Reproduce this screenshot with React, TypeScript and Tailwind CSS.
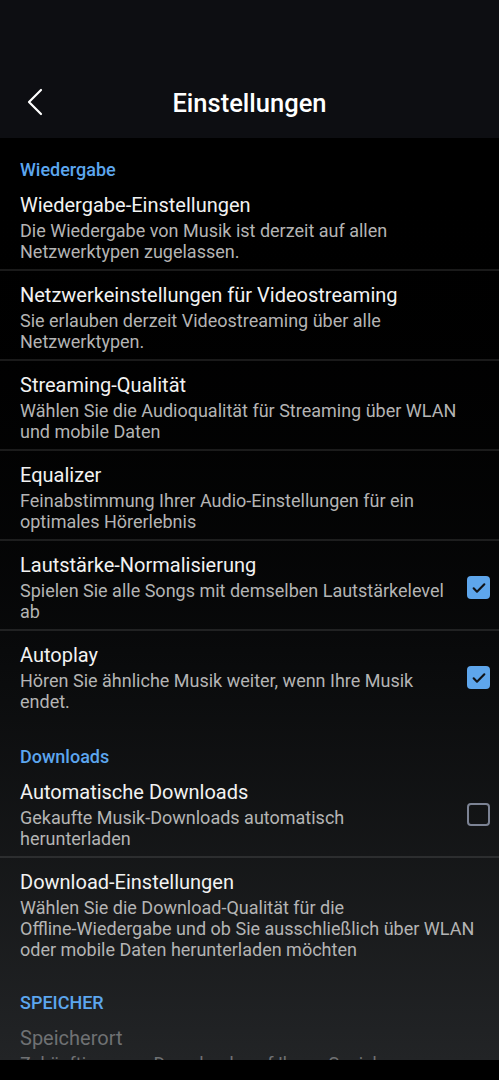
import React from 'react';

type Item = {
  title: string;
  lines: string[];
  checked?: boolean;
  disabled?: boolean;
  divider?: boolean;
};

type Section = {
  label: string;
  pad: string;
  items: Item[];
};

const sections: Section[] = [
  {
    label: 'Wiedergabe',
    pad: 'pt-[21px]',
    items: [
      { title: 'Wiedergabe-Einstellungen', lines: ['Die Wiedergabe von Musik ist derzeit auf allen', 'Netzwerktypen zugelassen.'], divider: true },
      { title: 'Netzwerkeinstellungen für Videostreaming', lines: ['Sie erlauben derzeit Videostreaming über alle', 'Netzwerktypen.'], divider: true },
      { title: 'Streaming-Qualität', lines: ['Wählen Sie die Audioqualität für Streaming über WLAN', 'und mobile Daten'], divider: true },
      { title: 'Equalizer', lines: ['Feinabstimmung Ihrer Audio-Einstellungen für ein', 'optimales Hörerlebnis'], divider: true },
      { title: 'Lautstärke-Normalisierung', lines: ['Spielen Sie alle Songs mit demselben Lautstärkelevel', 'ab'], checked: true, divider: true },
      { title: 'Autoplay', lines: ['Hören Sie ähnliche Musik weiter, wenn Ihre Musik', 'endet.'], checked: true },
    ],
  },
  {
    label: 'Downloads',
    pad: 'pt-[27px]',
    items: [
      { title: 'Automatische Downloads', lines: ['Gekaufte Musik-Downloads automatisch', 'herunterladen'], checked: false, divider: true },
      {
        title: 'Download-Einstellungen',
        lines: ['Wählen Sie die Download-Qualität für die', 'Offline-Wiedergabe und ob Sie ausschließlich über WLAN', 'oder mobile Daten herunterladen möchten'],
      },
    ],
  },
  {
    label: 'SPEICHER',
    pad: 'pt-[25px]',
    items: [
      { title: 'Speicherort', lines: ['Zukünftige neue Downloads auf Ihrem Speicher'], disabled: true },
    ],
  },
];

const Checkbox = ({ checked }: { checked: boolean }) =>
  checked ? (
    <div className="w-[23px] h-[23px] rounded-[4px] bg-[#5ea6ec] flex items-center justify-center">
      <svg width="16" height="16" viewBox="0 0 24 24" fill="none" stroke="#111418" strokeWidth="3.2" strokeLinecap="round" strokeLinejoin="round">
        <path d="M4 12.5l5 5L20 6.5" />
      </svg>
    </div>
  ) : (
    <div className="w-[23px] h-[23px] rounded-[4px] border-2 border-[#7c8394]" />
  );

const Row = ({ item }: { item: Item }) => (
  <div className={`flex items-center px-5 pt-3 pb-[7px] ${item.divider ? 'border-b-2 border-white/10' : ''}`}>
    <div className="flex-1 min-w-0">
      <p className={`text-[20px] leading-6 ${item.disabled ? 'text-[#6f7173]' : 'text-[#f2f2f2]'}`}>{item.title}</p>
      <div className={`mt-[3px] text-[18px] leading-[21px] ${item.disabled ? 'text-[#6f7173]' : 'text-[#b4b4b4]'}`}>
        {item.lines.map(l => (
          <p key={l} className="whitespace-nowrap">{l}</p>
        ))}
      </div>
    </div>
    {item.checked !== undefined && (
      <div className="ml-3 mr-[-11px] shrink-0">
        <Checkbox checked={item.checked} />
      </div>
    )}
  </div>
);

const App: React.FC = () => {
  return (
    <div className="w-[499px] h-[1080px] flex flex-col bg-black overflow-hidden" style={{ fontFamily: 'Roboto, "Noto Sans", sans-serif' }}>
      <header className="h-[138px] bg-[#0d0e12] flex items-end pb-[19px] relative shrink-0">
        <button className="absolute left-[26px] bottom-[22px] w-6 h-7 flex items-center">
          <svg width="18" height="28" viewBox="0 0 18 28" fill="none" stroke="#ffffff" strokeWidth="2.2" strokeLinecap="round" strokeLinejoin="round">
            <path d="M15 2L3 14l12 12" />
          </svg>
        </button>
        <h1 className="w-full text-center text-[25.5px] leading-8 font-medium text-white">Einstellungen</h1>
      </header>

      <main className="flex-1 overflow-hidden bg-linear-to-b from-black to-[#222426]">
        {sections.map(s => (
          <section key={s.label}>
            <h2 className={`px-5 ${s.pad} text-[18px] leading-[22px] font-medium text-[#5ca6ee]`}>{s.label}</h2>
            {s.items.map(it => (
              <Row key={it.title} item={it} />
            ))}
          </section>
        ))}
      </main>

      <div className="h-5 bg-black shrink-0" />
    </div>
  );
};

export default App;
